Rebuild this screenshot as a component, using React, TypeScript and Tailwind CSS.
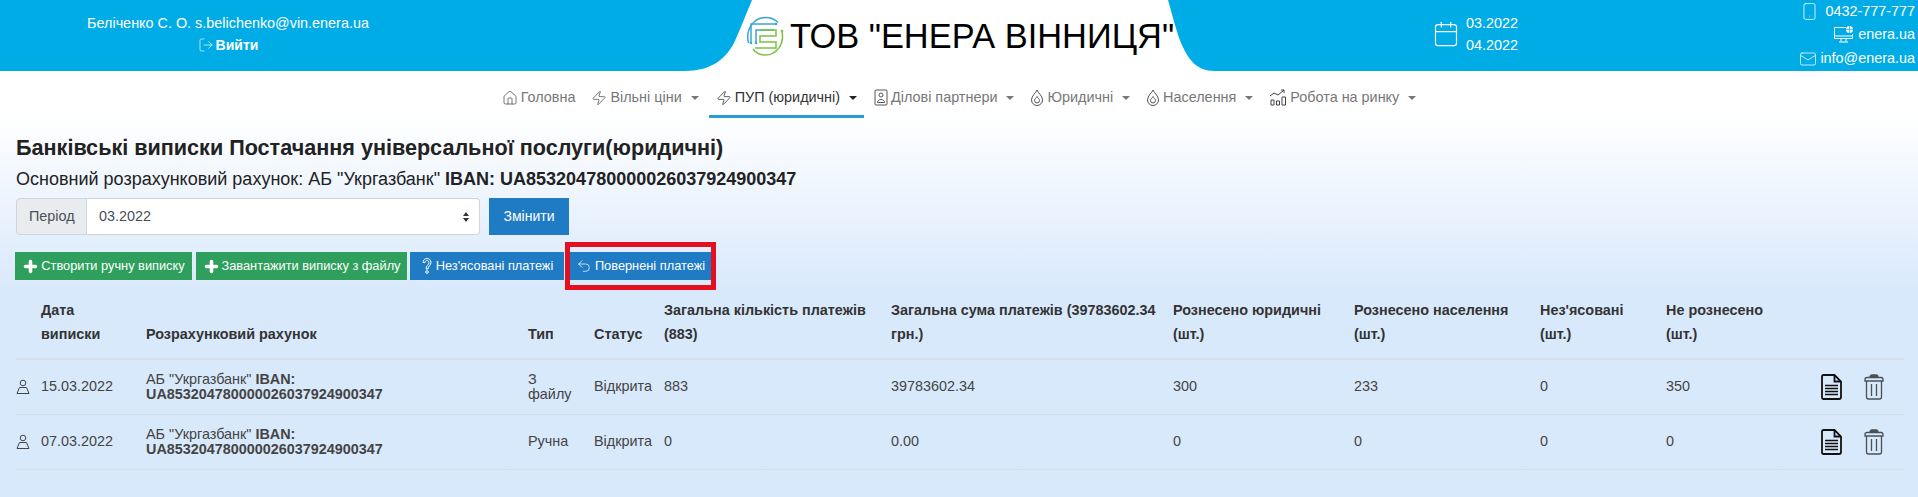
import { Calendar, Home, LogOut, Mail, Smartphone, Undo2, Zap, Plus } from 'lucide-react';
import type { ReactNode } from 'react';

const sans = "font-['Liberation_Sans',Arial,sans-serif]";

function DocIcon() {
  return (
    <svg viewBox="0 0 21 26" className="w-[21px] h-[26px]" fill="none" stroke="#111" strokeWidth="1.8">
      <path d="M2.5 1h11l6.5 6.5v15.5a2 2 0 0 1-2 2H2.5a1.5 1.5 0 0 1-1.5-1.5V2.5A1.5 1.5 0 0 1 2.5 1z" />
      <path d="M13.5 1v6.5H20" />
      <path d="M4 11.5h13M4 14.5h13M4 17.5h13M4 20.5h13" strokeWidth="1.4" />
    </svg>
  );
}

function TrashIcon() {
  return (
    <svg viewBox="0 0 20 26" className="w-[20px] h-[26px]" fill="none" stroke="#4a5058" strokeWidth="1.3">
      <path d="M1 7V5.5C1 4 2 3.5 3 3.5h14c1 0 2 .5 2 2V7z" />
      <path d="M6 3.5C6 1.5 7 1 8 1h4c1 0 2 .5 2 2.5" fill="#4a5058" />
      <path d="M2.5 7v16c0 1.200 1 2 2 2h11c1 0 2-.8 2-2V7" />
      <path d="M7.500 10v12M12.500 10v12" />
    </svg>
  );
}

function UserIcon() {
  return (
    <svg viewBox="0 0 14 16" className="w-[14px] h-[16px]" fill="none" stroke="#444" strokeWidth="1">
      <circle cx="7" cy="4" r="2.800" />
      <path d="M3.500 8.500h7L13 14.500H1z" strokeLinejoin="round" />
    </svg>
  );
}

function Logo() {
  return (
    <svg viewBox="0 0 38 40" className="w-[38px] h-[40px] shrink-0" fill="none" strokeWidth="1.5">
      <path d="M2.500 27C-1 13 8 1.500 20 1.500c5 0 9 2 12 5" stroke="#3aa5d8" />
      <path d="M36 15c2.500 13-5 24-17 24-5 0-9-2-12-6" stroke="#7cc242" />
      <path d="M5 27V8h24M10 27V14h18" stroke="#3aa5d8" />
      <path d="M14 14h16v6H14v6h16v6H9" stroke="#7cc242" />
      <circle cx="30" cy="8" r="1.300" fill="#3aa5d8" stroke="none" />
      <circle cx="5" cy="27" r="1.300" fill="#3aa5d8" stroke="none" />
      <circle cx="10" cy="27" r="1.300" fill="#3aa5d8" stroke="none" />
      <circle cx="36" cy="15" r="1.300" fill="#7cc242" stroke="none" />
    </svg>
  );
}

function DropIcon() {
  return (
    <svg viewBox="0 0 14 17" className="w-[14px] h-[17px]" fill="none" stroke="#555" strokeWidth="1">
      <path d="M7 1c1 3 5.500 5.500 5.500 10a5.500 5.500 0 0 1-11 0C1.500 6.500 6 4 7 1z" />
      <path d="M7 7.500c.5 1.500 2.500 2 2.500 4a2.500 2.500 0 0 1-5 0c0-2 2-2.500 2.500-4z" />
    </svg>
  );
}

function PartnerIcon() {
  return (
    <svg viewBox="0 0 14 17" className="w-[14px] h-[17px]" fill="none" stroke="#555" strokeWidth="1">
      <rect x="1" y="1" width="12" height="15" rx="1" />
      <circle cx="7" cy="6" r="2" />
      <path d="M3.500 13.500c0-4 7-4 7 0z" />
    </svg>
  );
}

function MarketIcon() {
  return (
    <svg viewBox="0 0 18 17" className="w-[18px] h-[17px]" fill="none" stroke="#444" strokeWidth="1">
      <path d="M1 7l4-3 4 2 6-5M12 1h3v3" />
      <path d="M2 11h3v5H2zM7.500 12h3v4h-3zM13 8h3.500v8H13z" />
    </svg>
  );
}

function WebIcon() {
  return (
    <svg viewBox="0 0 22 20" className="w-[22px] h-[20px]" fill="none" stroke="#fff" strokeWidth="1">
      <path d="M13 2.500H1.500v11h18V9" />
      <path d="M1.500 11h18M8 13.500v3M13 13.500v3M6 17h9" />
      <circle cx="16.500" cy="4.500" r="3.500" fill="#fff" stroke="none" />
      <path d="M13 4.500h7M16.500 1v7" stroke="#00ace6" strokeWidth=".7" />
    </svg>
  );
}

function QuestionIcon() {
  return (
    <svg viewBox="0 0 12 18" className="w-[12px] h-[18px]" fill="none" stroke="#fff" strokeWidth="1">
      <path d="M2 5.500C2 3 4 1.500 6 1.500s4 1.500 4 4c0 3-3 3.500-3 6.500H5c0-3.500 3-4 3-6.500C8 4.500 7 3.500 6 3.500S4 4.500 4 5.500z" />
      <circle cx="6" cy="15" r="1.300" />
    </svg>
  );
}

function NavItem({ icon, label, active, caret = true }: { icon: ReactNode; label: string; active?: boolean; caret?: boolean }) {
  return (
    <div className={`flex items-center gap-[3px] h-[36px] pb-[2px] border-b-[3px] ${active ? 'px-[7px] border-[#2a9fd6] text-[#333]' : 'px-[6px] border-transparent text-[#777]'}`}>
      {icon}
      <span>{label}</span>
      {caret && <span className={`ml-[6px] w-0 h-0 border-x-[4.5px] border-x-transparent border-t-[4.5px] ${active ? 'border-t-[#222]' : 'border-t-[#777]'}`} />}
    </div>
  );
}

const rows = [
  { date: '15.03.2022', type: 'З файлу', total: '883', sum: '39783602.34', jur: '300', pop: '233', unk: '0', not: '350' },
  { date: '07.03.2022', type: 'Ручна', total: '0', sum: '0.00', jur: '0', pop: '0', unk: '0', not: '0' },
];

const headers = ['', 'Дата\nвиписки', 'Розрахунковий рахунок', 'Тип', 'Статус', 'Загальна кількість платежів\n(883)', 'Загальна сума платежів (39783602.34\nгрн.)', 'Рознесено юридичні\n(шт.)', 'Рознесено населення\n(шт.)', "Нез'ясовані\n(шт.)", 'Не рознесено\n(шт.)', ''];
const widths = ['w-[13px]', 'w-[105px]', 'w-[382px]', 'w-[66px]', 'w-[70px]', 'w-[227px]', 'w-[282px]', 'w-[181px]', 'w-[186px]', 'w-[126px]', 'w-[155px]', 'w-[95px]'];

export default function App() {
  return (
    <div className={`${sans} relative h-[497px] w-[1918px] overflow-hidden text-[14.4px] text-[#333] bg-gradient-to-b from-white from-[115px] to-[#d9e9fc] to-[290px]`}>
      {/* top bar */}
      <header className="relative flex h-[71px] bg-[#00ace6] text-white">
        <svg viewBox="0 0 560 71" className="absolute left-[680px] top-0 w-[560px] h-[71px]">
          <path d="M72 0 C66 14 60 30 54 43 C45 60 30 71 5 71 H535 C515 71 508 58 501 43 C496 30 492 14 488 0 Z" fill="#fff" />
        </svg>
        <div className="absolute left-[78px] top-[14px] w-[300px] text-center leading-[18px]">
          <div>Беліченко С. О. s.belichenko@vin.enera.ua</div>
          <div className="mt-[4px] flex items-center justify-center gap-[2px] font-bold text-[14px]">
            <LogOut size={16} strokeWidth={1} />
            Вийти
          </div>
        </div>
        <div className="absolute left-[746px] top-[15px] flex items-center gap-[6px] text-[#000]">
          <Logo />
          <span className="text-[34.4px] leading-[42px]">ТОВ "ЕНЕРА ВІННИЦЯ"</span>
        </div>
        <div className="absolute left-[1432px] top-[12px] flex items-center gap-[6px]">
          <Calendar size={28} strokeWidth={1} />
          <div className="leading-[22px]">
            <div>03.2022</div>
            <div>04.2022</div>
          </div>
        </div>
        <div className="absolute right-[3px] top-0 text-right">
          <div className="flex items-center justify-end gap-[6px] h-[23px]"><Smartphone size={19} strokeWidth={1} />0432-777-777</div>
          <div className="flex items-center justify-end gap-[3px] h-[24px]"><WebIcon />enera.ua</div>
          <div className="flex items-center justify-end gap-[3px] h-[23px]"><Mail size={18} strokeWidth={1} />info@enera.ua</div>
        </div>
      </header>

      {/* nav */}
      <nav className="flex justify-center mt-[11px] gap-[4px] h-[36px]">
        <NavItem icon={<Home size={16} strokeWidth={1.1} color="#444" />} label="Головна" caret={false} />
        <NavItem icon={<Zap size={16} strokeWidth={1.1} color="#444" />} label="Вільні ціни" />
        <NavItem icon={<Zap size={16} strokeWidth={1.1} color="#222" />} label="ПУП (юридичні)" active />
        <NavItem icon={<PartnerIcon />} label="Ділові партнери" />
        <NavItem icon={<DropIcon />} label="Юридичні" />
        <NavItem icon={<DropIcon />} label="Населення" />
        <NavItem icon={<MarketIcon />} label="Робота на ринку" />
      </nav>

      <main className="px-[16px]">
        <h1 className="mt-[18px] font-bold text-[21.6px] leading-[24px] text-[#222]">Банківські виписки Постачання універсальної послуги(юридичні)</h1>
        <p className="mt-[7px] text-[18px] leading-[24px] text-[#222]">
          Основний розрахунковий рахунок: АБ "Укргазбанк" <b>IBAN: UA853204780000026037924900347</b>
        </p>

        <div className="mt-[7px] flex h-[37px]">
          <div className="flex items-center px-[12px] w-[71px] border border-[#ced4da] bg-[#e9ecef] rounded-l text-[#495057]">Період</div>
          <div className="flex items-center justify-between pl-[12px] pr-[10px] w-[393px] border border-l-0 border-[#ced4da] bg-white rounded-r text-[#495057]">
            03.2022
            <span className="flex flex-col gap-[2px]">
              <span className="w-0 h-0 border-x-[3.5px] border-x-transparent border-b-[4px] border-b-[#333]" />
              <span className="w-0 h-0 border-x-[3.5px] border-x-transparent border-t-[4px] border-t-[#333]" />
            </span>
          </div>
          <button className="ml-[9px] w-[80px] bg-[#1f7bc4] text-white text-[14px]">Змінити</button>
        </div>

        <div className="mt-[17px] -ml-[1px] flex items-center text-white text-[12.8px] h-[28px]">
          <button className="flex items-center justify-center gap-[2px] w-[177px] h-[28px] bg-[#2e9f5c]"><Plus size={17} strokeWidth={5} />Створити ручну виписку</button>
          <button className="ml-[4px] flex items-center justify-center gap-[2px] w-[211px] h-[28px] bg-[#2e9f5c]"><Plus size={17} strokeWidth={5} />Завантажити виписку з файлу</button>
          <button className="ml-[3px] flex items-center justify-center gap-[3px] w-[154px] h-[28px] bg-[#1f7bc4]"><QuestionIcon />Нез'ясовані платежі</button>
          <div className="ml-[1px] -my-[10px] border-[5px] border-[#e3101f] py-[5px]">
            <button className="flex items-center justify-center gap-[3px] w-[141px] h-[28px] bg-[#1f7bc4]"><Undo2 size={16} strokeWidth={1.1} />Повернені платежі</button>
          </div>
        </div>

        <table className="mt-[16px] table-fixed border-collapse w-[1888px]">
          <colgroup>
            {widths.map((w, i) => (
              <col key={i} className={w} />
            ))}
          </colgroup>
          <thead>
            <tr className="border-b-2 border-[#d5e0ec]">
              {headers.map((h, i) => (
                <th key={i} className="pl-[12px] first:pl-0 pb-[12px] pt-[2px] text-left align-bottom font-bold leading-[24px] text-[#333] whitespace-pre">{h}</th>
              ))}
            </tr>
          </thead>
          <tbody>
            {rows.map((r) => (
              <tr key={r.date} className="h-[55px] border-b border-[#d5e0ec] leading-[15px] text-[#444]">
                <td><UserIcon /></td>
                <td className="px-[12px]">{r.date}</td>
                <td className="px-[12px]">АБ "Укргазбанк" <b>IBAN: UA853204780000026037924900347</b></td>
                <td className="px-[12px]">{r.type}</td>
                <td className="px-[12px]">Відкрита</td>
                <td className="px-[12px]">{r.total}</td>
                <td className="px-[12px]">{r.sum}</td>
                <td className="px-[12px]">{r.jur}</td>
                <td className="px-[12px]">{r.pop}</td>
                <td className="px-[12px]">{r.unk}</td>
                <td className="px-[12px]">{r.not}</td>
                <td>
                  <div className="flex gap-[22px] ml-[12px]">
                    <DocIcon />
                    <TrashIcon />
                  </div>
                </td>
              </tr>
            ))}
          </tbody>
        </table>
      </main>
    </div>
  );
}
